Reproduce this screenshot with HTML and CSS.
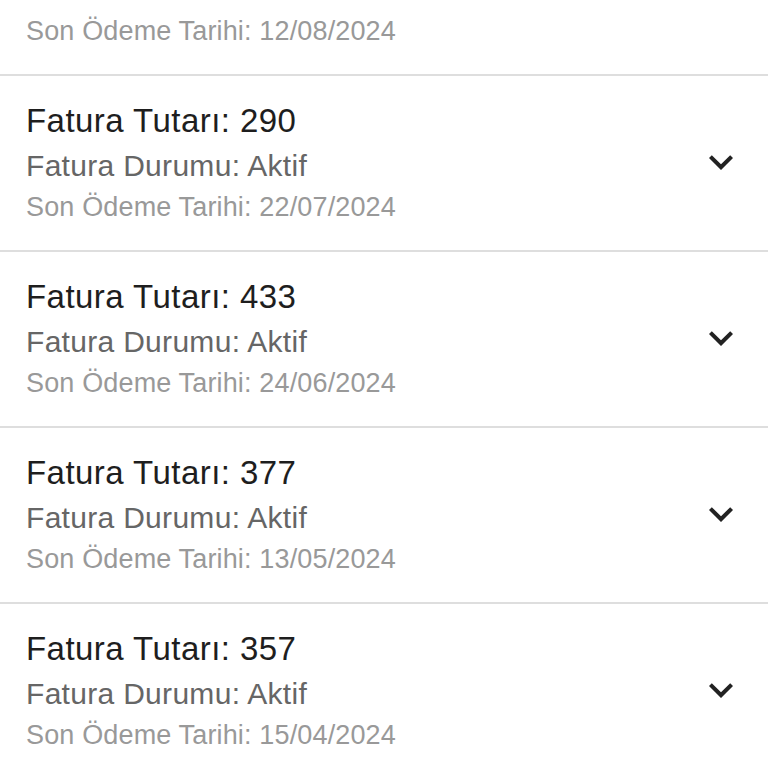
FILE: index.html
```html
<!DOCTYPE html>
<html lang="tr">
<head>
  <meta charset="UTF-8" />
  <meta name="viewport" content="width=device-width, initial-scale=1.0" />
  <title>Faturalar</title>
  <link rel="stylesheet" href="styles.css">
</head>
<body>
  <ul class="bill-list">
    <li class="bill">
      <div class="bill-info">
        <div class="bill-amount">Fatura Tutarı: 318</div>
        <div class="bill-status">Fatura Durumu: Aktif</div>
        <div class="bill-date">Son Ödeme Tarihi: 12/08/2024</div>
      </div>
      <svg class="chevron" viewBox="0 0 24 24"><path d="M16.59 8.59L12 13.17 7.41 8.59 6 10l6 6 6-6z"/></svg>
    </li>
    <li class="bill">
      <div class="bill-info">
        <div class="bill-amount">Fatura Tutarı: 290</div>
        <div class="bill-status">Fatura Durumu: Aktif</div>
        <div class="bill-date">Son Ödeme Tarihi: 22/07/2024</div>
      </div>
      <svg class="chevron" viewBox="0 0 24 24"><path d="M16.59 8.59L12 13.17 7.41 8.59 6 10l6 6 6-6z"/></svg>
    </li>
    <li class="bill">
      <div class="bill-info">
        <div class="bill-amount">Fatura Tutarı: 433</div>
        <div class="bill-status">Fatura Durumu: Aktif</div>
        <div class="bill-date">Son Ödeme Tarihi: 24/06/2024</div>
      </div>
      <svg class="chevron" viewBox="0 0 24 24"><path d="M16.59 8.59L12 13.17 7.41 8.59 6 10l6 6 6-6z"/></svg>
    </li>
    <li class="bill">
      <div class="bill-info">
        <div class="bill-amount">Fatura Tutarı: 377</div>
        <div class="bill-status">Fatura Durumu: Aktif</div>
        <div class="bill-date">Son Ödeme Tarihi: 13/05/2024</div>
      </div>
      <svg class="chevron" viewBox="0 0 24 24"><path d="M16.59 8.59L12 13.17 7.41 8.59 6 10l6 6 6-6z"/></svg>
    </li>
    <li class="bill">
      <div class="bill-info">
        <div class="bill-amount">Fatura Tutarı: 357</div>
        <div class="bill-status">Fatura Durumu: Aktif</div>
        <div class="bill-date">Son Ödeme Tarihi: 15/04/2024</div>
      </div>
      <svg class="chevron" viewBox="0 0 24 24"><path d="M16.59 8.59L12 13.17 7.41 8.59 6 10l6 6 6-6z"/></svg>
    </li>
  </ul>
</body>
</html>
```

FILE: styles.css
```css
/* Reset */
* {
  margin: 0;
  padding: 0;
  box-sizing: border-box;
}

body {
  background: #fff;
  font-family: "Liberation Sans", Arial, sans-serif;
  color: #222;
  overflow: hidden;
}

/* List, scrolled so the first bill is cut off */
.bill-list {
  list-style: none;
  margin-top: -100px;
}

.bill {
  display: flex;
  align-items: center;
  height: 176px;
  padding: 25px 23px 23px 26px;
  border-bottom: 2px solid #dedede;
}

.bill-info {
  flex: 1;
}

.bill-amount {
  font-size: 33px;
  line-height: 40px;
  letter-spacing: 0.45px;
  color: #1e1e1e;
}

.bill-status {
  margin-top: 5px;
  font-size: 30px;
  line-height: 40px;
  letter-spacing: 0.3px;
  color: #666;
}

.bill-date {
  margin-top: 1px;
  font-size: 27px;
  line-height: 40px;
  letter-spacing: 0.15px;
  color: #999;
}

.chevron {
  width: 48px;
  height: 48px;
  margin-bottom: 4px;
  fill: #222;
  flex-shrink: 0;
}
```
